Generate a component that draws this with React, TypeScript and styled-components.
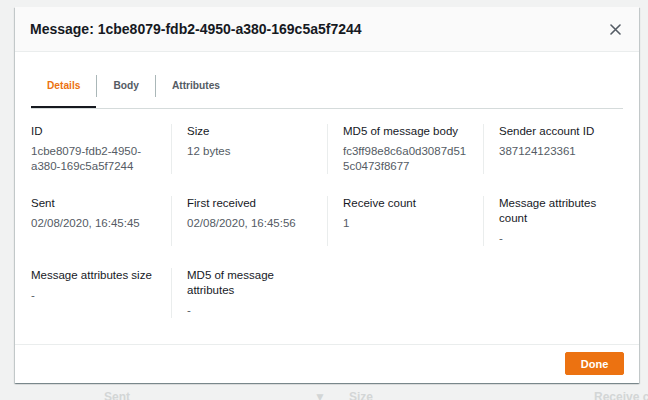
import React from "react";
import styled, { createGlobalStyle } from "styled-components";

const Global = createGlobalStyle`
  html, body { margin: 0; padding: 0; }
  body {
    width: 648px;
    height: 400px;
    overflow: hidden;
    background: #f2f3f3;
    font-family: "Liberation Sans", Arial, sans-serif;
  }
`;

const Page = styled.div`
  position: relative;
  width: 648px;
  height: 400px;
  display: flex;
  flex-direction: column;
  justify-content: flex-end;
  background: #f1f2f2;
`;

const BackRow = styled.div`
  display: flex;
  align-items: center;
  height: 12px;
  padding-left: 104px;
  font-size: 12px;
  font-weight: 700;
  color: #d3d6d6;
  white-space: nowrap;
  overflow: hidden;
`;

const BackCell = styled.span<{ $w: number }>`
  flex: 0 0 ${(p) => p.$w}px;
  padding-top: 6px;
`;

const Overlay = styled.div`
  position: absolute;
  inset: 0;
  padding: 7px 0 0 15px;
`;

const Modal = styled.div`
  width: 624px;
  background: #fff;
  box-shadow: 0 1px 1px 0 rgba(0, 28, 36, 0.3),
    1px 1px 1px 0 rgba(0, 28, 36, 0.15), -1px 1px 1px 0 rgba(0, 28, 36, 0.15);
  display: flex;
  flex-direction: column;
`;

const Header = styled.div`
  height: 44px;
  background: #fafafa;
  border-bottom: 1px solid #eaeded;
  display: flex;
  align-items: center;
  justify-content: space-between;
  padding: 0 18px 0 15px;
`;

const Title = styled.h2`
  margin: 0;
  font-size: 14px;
  font-weight: 700;
  color: #16191f;
`;

const Close = styled.button`
  border: 0;
  background: none;
  padding: 0;
  width: 11px;
  height: 11px;
  display: flex;
  align-items: center;
  justify-content: center;
  cursor: pointer;
`;

const Body = styled.div`
  padding: 20px 16px 26px;
`;

const TabList = styled.div`
  display: flex;
  border-bottom: 1px solid #d5dbdb;
`;

const Tab = styled.button<{ $active?: boolean; $last?: boolean }>`
  position: relative;
  border: 0;
  background: none;
  padding: 3px 0 11px;
  font-family: inherit;
  font-size: 10.2px;
  font-weight: 700;
  color: ${(p) => (p.$active ? "#ec7211" : "#545b64")};
  cursor: pointer;

  span {
    display: block;
    line-height: 22px;
    padding: 0 16px;
    border-right: 1px solid ${(p) => (p.$last ? "transparent" : "#aab7b8")};
  }

  &::after {
    content: "";
    position: absolute;
    left: 0;
    right: 1px;
    bottom: 0;
    height: 2px;
    background: ${(p) => (p.$active ? "#16191f" : "transparent")};
  }
`;

const Grid = styled.div`
  margin: 15px -16px 0;
  display: grid;
  grid-template-columns: repeat(4, 1fr);
  row-gap: 22px;
`;

const Item = styled.div<{ $first?: boolean }>`
  border-left: 1px solid ${(p) => (p.$first ? "transparent" : "#eaeded")};
  padding: 0 14px 0 15px;
  min-width: 0;
`;

const Label = styled.div`
  font-size: 11.5px;
  line-height: 15px;
  color: #16191f;
`;

const Value = styled.div`
  margin-top: 5px;
  font-size: 11.5px;
  line-height: 15px;
  color: #545b64;
  overflow-wrap: anywhere;
`;

const Footer = styled.div`
  border-top: 1px solid #eaeded;
  display: flex;
  justify-content: flex-end;
  padding: 7px 15px 8px;
`;

const Done = styled.button`
  width: 59px;
  height: 23px;
  border: 1px solid #ec7211;
  border-radius: 2px;
  background: #ec7211;
  color: #fff;
  font-family: inherit;
  font-size: 11px;
  font-weight: 700;
  cursor: pointer;
`;

type KV = { label: string; value: string };

const rows: KV[] = [
  { label: "ID", value: "1cbe8079-fdb2-4950-a380-169c5a5f7244" },
  { label: "Size", value: "12 bytes" },
  { label: "MD5 of message body", value: "fc3ff98e8c6a0d3087d515c0473f8677" },
  { label: "Sender account ID", value: "387124123361" },
  { label: "Sent", value: "02/08/2020, 16:45:45" },
  { label: "First received", value: "02/08/2020, 16:45:56" },
  { label: "Receive count", value: "1" },
  { label: "Message attributes count", value: "-" },
  { label: "Message attributes size", value: "-" },
  { label: "MD5 of message attributes", value: "-" },
];

export default function App() {
  return (
    <>
      <Global />
      <Page>
        <BackRow>
          <BackCell $w={210}>Sent</BackCell>
          <BackCell $w={35}>▼</BackCell>
          <BackCell $w={245}>Size</BackCell>
          <BackCell $w={80}>Receive count</BackCell>
        </BackRow>
        <Overlay>
          <Modal>
            <Header>
              <Title>Message: 1cbe8079-fdb2-4950-a380-169c5a5f7244</Title>
              <Close aria-label="Close">
                <svg width="11" height="11" viewBox="0 0 11 11">
                  <path
                    d="M1 1 L10 10 M10 1 L1 10"
                    stroke="#545b64"
                    strokeWidth="1.6"
                    strokeLinecap="round"
                  />
                </svg>
              </Close>
            </Header>
            <Body>
              <TabList>
                <Tab $active>
                  <span>Details</span>
                </Tab>
                <Tab>
                  <span>Body</span>
                </Tab>
                <Tab $last>
                  <span>Attributes</span>
                </Tab>
              </TabList>
              <Grid>
                {rows.map((r, i) => (
                  <Item key={i} $first={i % 4 === 0}>
                    <Label>{r.label}</Label>
                    <Value>{r.value}</Value>
                  </Item>
                ))}
              </Grid>
            </Body>
            <Footer>
              <Done>Done</Done>
            </Footer>
          </Modal>
        </Overlay>
      </Page>
    </>
  );
}
